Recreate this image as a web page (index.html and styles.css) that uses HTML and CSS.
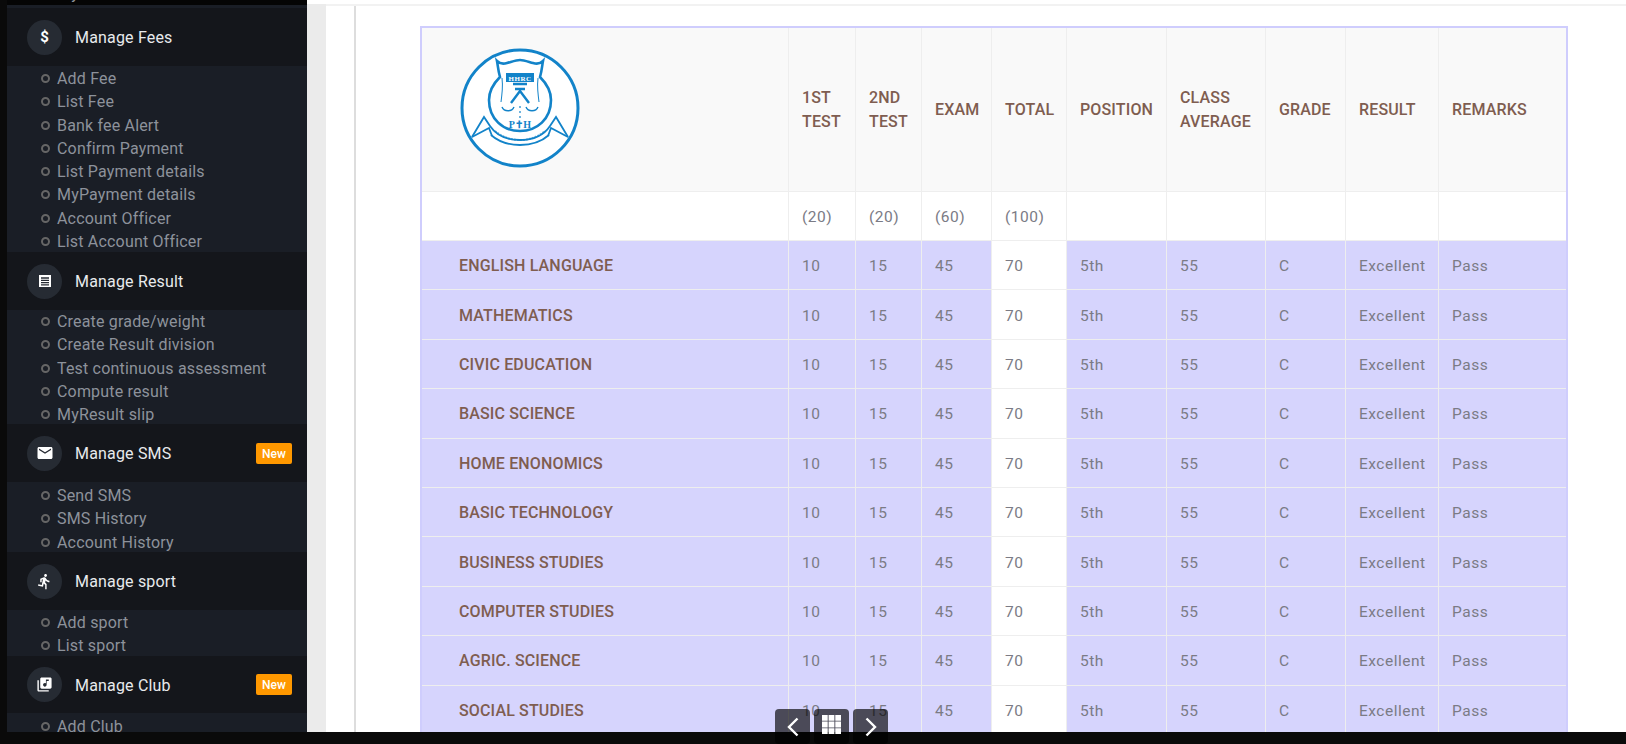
FILE: index.html
```html
<!DOCTYPE html>
<html lang="en">
<head>
    <meta charset="UTF-8">
    <meta name="viewport" content="width=device-width, initial-scale=1.0">
    <title>Manage Result</title>
    <link rel="stylesheet" href="styles.css">
</head>
<body>

<div class="frame">
    <aside class="sidebar">
        <div class="sidebar-top"><span class="cut-item">My</span></div>
        <div class="sidebar-gap"></div>

        <div class="nav-head">
            <span class="nav-icon nav-dollar">$</span>
            <span class="nav-title">Manage Fees</span>
        </div>
        <ul class="nav-sub sub-fees">
            <li>Add Fee</li>
            <li>List Fee</li>
            <li>Bank fee Alert</li>
            <li>Confirm Payment</li>
            <li>List Payment details</li>
            <li>MyPayment details</li>
            <li>Account Officer</li>
            <li>List Account Officer</li>
        </ul>

        <div class="nav-head">
            <span class="nav-icon">
                <svg width="14" height="14" viewBox="0 0 14 14"><path fill="#fff" d="M1 1h12v12H1z"/><path stroke="#262b33" stroke-width="1.3" d="M3 4h8M3 6.3h8M3 8.6h8M3 10.9h8"/></svg>
            </span>
            <span class="nav-title">Manage Result</span>
        </div>
        <ul class="nav-sub sub-result">
            <li>Create grade/weight</li>
            <li>Create Result division</li>
            <li>Test continuous assessment</li>
            <li>Compute result</li>
            <li>MyResult slip</li>
        </ul>

        <div class="nav-head">
            <span class="nav-icon">
                <svg width="18" height="18" viewBox="0 0 24 24"><path fill="#fff" d="M20 4H4c-1.1 0-1.99.9-1.99 2L2 18c0 1.1.9 2 2 2h16c1.1 0 2-.9 2-2V6c0-1.1-.9-2-2-2zm0 4l-8 5-8-5V6l8 5 8-5v2z"/></svg>
            </span>
            <span class="nav-title">Manage SMS</span>
            <span class="badge">New</span>
        </div>
        <ul class="nav-sub sub-sms">
            <li>Send SMS</li>
            <li>SMS History</li>
            <li>Account History</li>
        </ul>

        <div class="nav-head">
            <span class="nav-icon">
                <svg width="17" height="17" viewBox="0 0 24 24"><path fill="#fff" d="M13.49 5.48c1.1 0 2-.9 2-2s-.9-2-2-2-2 .9-2 2 .9 2 2 2zm-3.6 13.9l1-4.4 2.1 2v6h2v-7.5l-2.1-2 .6-3c1.3 1.5 3.3 2.5 5.5 2.5v-2c-1.9 0-3.5-1-4.3-2.4l-1-1.6c-.4-.6-1-1-1.7-1-.3 0-.5.1-.8.1l-5.2 2.2v4.7h2v-3.4l1.8-.7-1.6 8.1-4.9-1-.4 2 7 1.4z"/></svg>
            </span>
            <span class="nav-title">Manage sport</span>
        </div>
        <ul class="nav-sub sub-sport">
            <li>Add sport</li>
            <li>List sport</li>
        </ul>

        <div class="nav-head nav-head-last">
            <span class="nav-icon">
                <svg width="17" height="17" viewBox="0 0 24 24"><path fill="#fff" d="M20 2H8c-1.1 0-2 .9-2 2v12c0 1.1.9 2 2 2h12c1.1 0 2-.9 2-2V4c0-1.1-.9-2-2-2zm-2 5h-3v5.5c0 1.38-1.12 2.5-2.5 2.5S10 13.88 10 12.5s1.12-2.5 2.5-2.5c.57 0 1.08.19 1.5.51V5h4v2zM4 6H2v14c0 1.1.9 2 2 2h14v-2H4V6z"/></svg>
            </span>
            <span class="nav-title">Manage Club</span>
            <span class="badge">New</span>
        </div>
        <ul class="nav-sub sub-club">
            <li>Add Club</li>
        </ul>
    </aside>

    <div class="gutter"></div>

    <main class="page">
        <div class="page-top"></div>
        <div class="page-body">
            <table class="result-table">
                <thead>
                    <tr class="head-row">
                        <th class="subject-cell">
                            <svg class="logo" width="120" height="120" viewBox="0 0 120 120">
                                <circle cx="60" cy="60" r="58" fill="#fff" stroke="#1283c9" stroke-width="3"/>
                                <g fill="none" stroke="#1283c9" stroke-width="2">
                                    <path stroke-width="2.6" d="M37 13c3 3 7 3 10 2 4-1 9-3 13-3s9 2 13 3c3 1 7 1 10-2-1 5-1 9-3 16 6 6 11 14 11 23 0 19-14 31-31 31S29 71 29 52c0-9 5-17 11-23-2-7-2-11-3-16z"/>
                                    <path stroke-width="1" d="M42 30c1 8 0 16-1 24M78 30c-1 8 0 16 1 24"/>
                                    <path stroke-width="1.4" d="M42 59c2 5 10 5 12 0M66 59c2 5 10 5 12 0"/>
                                    <path stroke-width="2.4" d="M53 36h14M55 41h10M51 55l9-12 9 12"/>
                                    <path stroke-width="1.2" stroke-dasharray="2 3" d="M60 58v14"/>
                                    <path stroke-width="1.8" d="M12 89l12-20 6 9c6 9 17 14 30 14s24-5 30-14l6-9 12 20"/>
                                    <path stroke-width="1.8" d="M12 89l17-9 3 8M108 89l-17-9-3 8"/>
                                    <path stroke-width="1.8" d="M31 87c8 7 18 10 29 10s21-3 29-10"/>
                                    <path stroke-width="2" stroke-dasharray="2 1" opacity="0.6" d="M35 83c7 6 16 9 25 9s18-3 25-9"/>
                                </g>
                                <rect x="46" y="25" width="28" height="9" fill="#1283c9"/>
                                <text class="logo-crest" x="60" y="33" text-anchor="middle">HHRC</text>
                                <text class="logo-letters" x="60" y="80" text-anchor="middle">P✝H</text>
                            </svg>
                        </th>
                        <th>1ST TEST</th>
                        <th>2ND TEST</th>
                        <th>EXAM</th>
                        <th>TOTAL</th>
                        <th>POSITION</th>
                        <th>CLASS AVERAGE</th>
                        <th>GRADE</th>
                        <th>RESULT</th>
                        <th>REMARKS</th>
                    </tr>
                </thead>
                <tbody>
                    <tr class="max-row">
                        <td></td><td>(20)</td><td>(20)</td><td>(60)</td><td>(100)</td><td></td><td></td><td></td><td></td><td></td>
                    </tr>
                    <tr><th class="subject">ENGLISH LANGUAGE</th><td>10</td><td>15</td><td>45</td><td class="total">70</td><td>5th</td><td>55</td><td>C</td><td>Excellent</td><td>Pass</td></tr>
                    <tr><th class="subject">MATHEMATICS</th><td>10</td><td>15</td><td>45</td><td class="total">70</td><td>5th</td><td>55</td><td>C</td><td>Excellent</td><td>Pass</td></tr>
                    <tr><th class="subject">CIVIC EDUCATION</th><td>10</td><td>15</td><td>45</td><td class="total">70</td><td>5th</td><td>55</td><td>C</td><td>Excellent</td><td>Pass</td></tr>
                    <tr><th class="subject">BASIC SCIENCE</th><td>10</td><td>15</td><td>45</td><td class="total">70</td><td>5th</td><td>55</td><td>C</td><td>Excellent</td><td>Pass</td></tr>
                    <tr><th class="subject">HOME ENONOMICS</th><td>10</td><td>15</td><td>45</td><td class="total">70</td><td>5th</td><td>55</td><td>C</td><td>Excellent</td><td>Pass</td></tr>
                    <tr><th class="subject">BASIC TECHNOLOGY</th><td>10</td><td>15</td><td>45</td><td class="total">70</td><td>5th</td><td>55</td><td>C</td><td>Excellent</td><td>Pass</td></tr>
                    <tr><th class="subject">BUSINESS STUDIES</th><td>10</td><td>15</td><td>45</td><td class="total">70</td><td>5th</td><td>55</td><td>C</td><td>Excellent</td><td>Pass</td></tr>
                    <tr><th class="subject">COMPUTER STUDIES</th><td>10</td><td>15</td><td>45</td><td class="total">70</td><td>5th</td><td>55</td><td>C</td><td>Excellent</td><td>Pass</td></tr>
                    <tr><th class="subject">AGRIC. SCIENCE</th><td>10</td><td>15</td><td>45</td><td class="total">70</td><td>5th</td><td>55</td><td>C</td><td>Excellent</td><td>Pass</td></tr>
                    <tr><th class="subject">SOCIAL STUDIES</th><td>10</td><td>15</td><td>45</td><td class="total">70</td><td>5th</td><td>55</td><td>C</td><td>Excellent</td><td>Pass</td></tr>
                </tbody>
            </table>
        </div>
    </main>
</div>
<div class="bottom-bar"></div>

<div class="pager">
    <button class="pager-btn" type="button" aria-label="Previous">
        <svg width="14" height="20" viewBox="0 0 14 20"><path fill="none" stroke="#fff" stroke-width="2.4" d="M11.5 1.500L3 10l8.500 8.500"/></svg>
    </button>
    <button class="pager-btn pager-grid" type="button" aria-label="Grid">
        <svg width="19" height="19" viewBox="0 0 19 19"><path fill="#fff" d="M0 0h5.700v5.700H0zM6.600 0h5.800v5.700H6.600zM13.300 0H19v5.700h-5.700zM0 6.600h5.700v5.800H0zM6.600 6.600h5.800v5.800H6.600zM13.300 6.600H19v5.800h-5.700zM0 13.300h5.700V19H0zM6.600 13.300h5.800V19H6.600zM13.300 13.300H19V19h-5.700z"/></svg>
    </button>
    <button class="pager-btn" type="button" aria-label="Next">
        <svg width="14" height="20" viewBox="0 0 14 20"><path fill="none" stroke="#fff" stroke-width="2.4" d="M2.500 1.500L11 10l-8.500 8.500"/></svg>
    </button>
</div>

</body>
</html>
```

FILE: styles.css
```css
html, body {
    margin: 0;
    height: 744px;
    overflow: hidden;
}
body {
    font-family: Roboto, "Liberation Sans", sans-serif;
    background-color: #0a0a0a;
    position: relative;
}
.frame {
    display: flex;
    height: 732px;
    padding-left: 7px;
    overflow: hidden;
}
.bottom-bar {
    height: 12px;
    background: #0a0a0a;
}

/* sidebar */
.sidebar {
    width: 300px;
    flex: none;
    overflow: hidden;
    background: #1a1e26;
}
.sidebar-top {
    height: 5px;
    background: #050505;
    overflow: hidden;
    padding-left: 50px;
}
.cut-item {
    display: block;
    margin-top: -15px;
    font-size: 16px;
    letter-spacing: 0.18px;
    line-height: 18px;
    color: #8d929b;
}
.sidebar-gap {
    height: 3px;
}
.nav-head {
    display: flex;
    align-items: center;
    height: 58px;
    padding: 0 15px 0 20px;
    background: #14161b;
    box-sizing: border-box;
}
.nav-head-last {
    height: 57px;
}
.nav-icon {
    width: 35px;
    height: 35px;
    flex: none;
    display: flex;
    align-items: center;
    justify-content: center;
    border-radius: 50%;
    background: #262b33;
    color: #fff;
}
.nav-dollar {
    font-size: 15px;
    font-weight: 700;
}
.nav-title {
    margin-left: 13px;
    padding-top: 1px;
    flex: 1;
    font-size: 16px;
    letter-spacing: 0.18px;
    color: #e8eaed;
}
.badge {
    width: 36px;
    height: 21px;
    background: #ff9800;
    border-radius: 2px;
    color: #fff;
    font-size: 12px;
    font-weight: 500;
    line-height: 23px;
    text-align: center;
}
.nav-sub {
    list-style: none;
    margin: 0;
    padding: 0 0 0 34px;
    overflow: hidden;
    box-sizing: border-box;
}
.nav-sub li {
    display: flex;
    align-items: center;
    height: 23.25px;
    font-size: 16px;
    letter-spacing: 0.18px;
    color: #8d929b;
}
.nav-sub li::before {
    content: "";
    width: 9px;
    height: 9px;
    margin-right: 7px;
    flex: none;
    box-sizing: border-box;
    border: 2px solid #666;
    border-radius: 50%;
}
.sub-fees { height: 186px; padding-top: 1px; }
.sub-result { height: 114px; }
.sub-sms { height: 70px; padding-top: 2px; }
.sub-sport { height: 46px; padding-top: 1px; }
.sub-club { padding-top: 2px; }

/* page */
.gutter {
    width: 19px;
    flex: none;
    border-top: 4px solid #fff;
    background: #ebebeb;
}
.page {
    flex: 1;
    min-width: 0;
    background: #fff;
}
.page-top {
    height: 4px;
    border-bottom: 2px solid #f2f2f2;
}
.page-body {
    margin-left: 28px;
    padding: 20px 0 0 64px;
    border-left: 2px solid #ddd;
    height: 100%;
}
.result-table {
    width: 1148px;
    table-layout: fixed;
    border-collapse: separate;
    border-spacing: 0;
    border: 2px solid #cfcdfd;
    font-size: 15.5px;
    letter-spacing: 0.5px;
    color: #7b7b85;
}
.result-table th,
.result-table td {
    padding: 2px 13px 0;
    height: 49.4px;
    box-sizing: border-box;
    border-right: 1px solid #eee;
    border-bottom: 1px solid #eee;
    text-align: left;
    font-weight: 400;
    line-height: 24px;
}
.result-table tr > :last-child {
    border-right: 0;
}
.head-row {
    background: #f9f9f9;
}
.result-table .head-row th {
    height: 164px;
    padding-top: 0;
    color: #7f5d50;
    font-size: 16px;
    font-weight: 500;
    letter-spacing: 0.15px;
}
.result-table .head-row .subject-cell {
    padding: 0 0 0 38px;
}
.logo {
    display: block;
    margin-top: -3px;
}
.logo-crest {
    font-size: 7px;
    font-weight: 700;
    letter-spacing: 0.5px;
    fill: #fff;
    font-family: "Liberation Serif", serif;
}
.logo-letters {
    font-size: 10px;
    font-weight: 700;
    fill: #1283c9;
    font-family: "Liberation Serif", serif;
}
.max-row td {
    background: #fff;
    height: 49px;
}
tbody tr {
    background: #d6d4fd;
}
.result-table .subject {
    padding-left: 37px;
    color: #7f5d50;
    font-size: 16px;
    font-weight: 500;
    letter-spacing: 0.15px;
}
.result-table .total {
    background: #fff;
}
.result-table tr > :nth-child(1) { width: 367px; }
.result-table tr > :nth-child(2) { width: 67px; }
.result-table tr > :nth-child(3) { width: 66px; }
.result-table tr > :nth-child(4) { width: 70px; }
.result-table tr > :nth-child(5) { width: 75px; }
.result-table tr > :nth-child(6) { width: 100px; }
.result-table tr > :nth-child(7) { width: 99px; }
.result-table tr > :nth-child(8) { width: 80px; }
.result-table tr > :nth-child(9) { width: 93px; }

/* slide controls over the page */
.pager {
    position: absolute;
    left: 775px;
    top: 709px;
    display: flex;
    gap: 4px;
}
.pager-btn {
    width: 35px;
    height: 35px;
    padding: 0;
    border: none;
    border-radius: 4px;
    background: rgba(0, 0, 0, 0.65);
    display: flex;
    align-items: center;
    justify-content: center;
}
.pager-grid {
    padding-bottom: 4px;
}
```
